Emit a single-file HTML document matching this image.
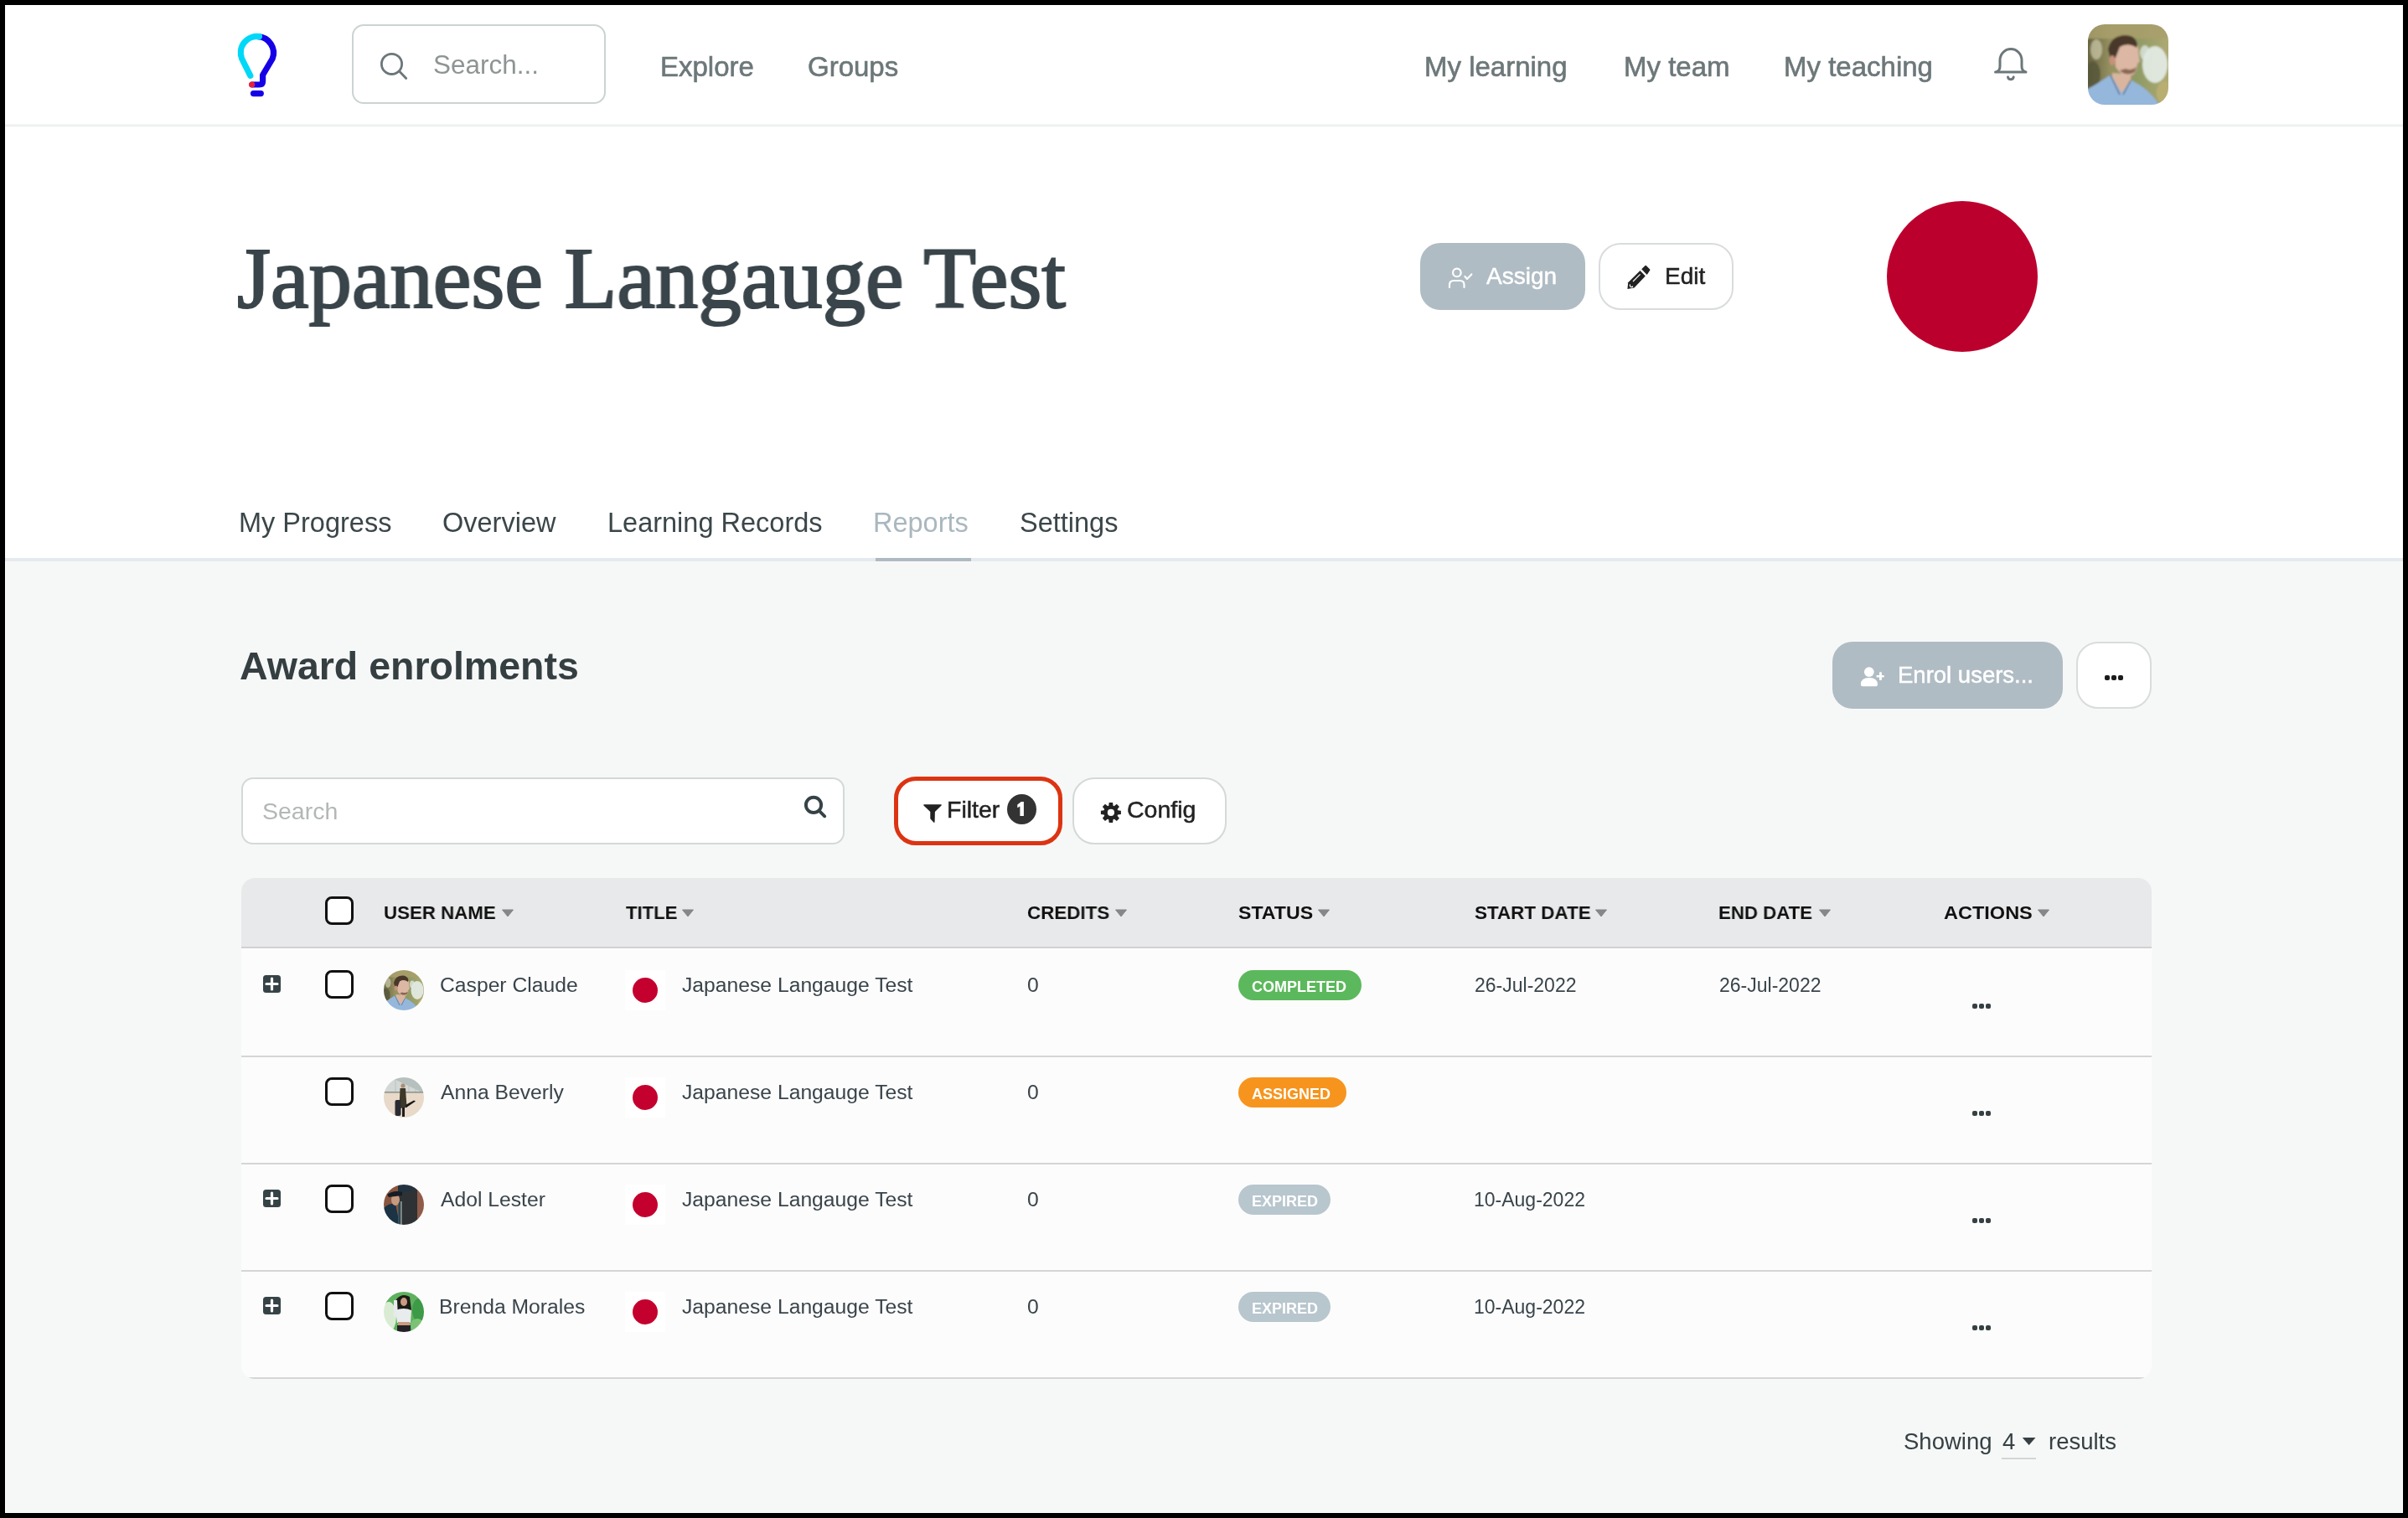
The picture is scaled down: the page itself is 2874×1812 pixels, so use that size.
<!DOCTYPE html><html><head><meta charset="utf-8"><style>
html,body{margin:0;padding:0;width:2874px;height:1812px;overflow:hidden;background:#000}
.t{position:absolute;white-space:nowrap;will-change:transform}
.b{position:absolute;display:block}
</style></head><body>
<div class="b" style="left:0px;top:0px;width:2874px;height:1812px;background:#000"></div>
<div class="b" style="left:6px;top:6px;width:2862px;height:1800px;background:#fff"></div>
<div class="b" style="left:7px;top:670px;width:2860px;height:1135px;background:#f6f8f7"></div>
<div class="b" style="left:6px;top:148px;width:2862px;height:2px;background:#f2f3f5"></div>
<div class="b" style="left:6px;top:150px;width:2862px;height:1px;background:#eaebec"></div>
<svg class="b" style="left:270px;top:30px" width="80" height="95" viewBox="0 0 80 95"><g fill="none" stroke-linecap="round" stroke-linejoin="round" stroke-width="7.2">
<path d="M38 13.6 A19.5 19.5 0 0 1 55.2 40 L43.6 59.5 L43.6 67 Q43.6 71 39.6 71 L31 71" stroke="#1600e6"/>
<path d="M39.5 13.6 A19.5 19.5 0 0 0 18.6 40 L28.8 60.3" stroke="#00d8f8"/>
<path d="M32.5 81.6 L41.3 81.6" stroke="#1600e6"/>
</g><circle cx="30.6" cy="71" r="3.6" fill="#e8213b"/></svg>
<div class="b" style="left:420px;top:29px;width:303px;height:95px;border:2px solid #ccd3d3;border-radius:14px;box-sizing:border-box;background:#fff"></div>
<svg class="b" style="left:440px;top:50px" width="60" height="60" viewBox="0 0 60 60"><g fill="none" stroke="#6c777a" stroke-width="2.8" stroke-linecap="round"><circle cx="27.5" cy="26.4" r="12.1"/><path d="M37 35.6 L44.7 43.5"/></g></svg>
<div class="t" id="t0" style="left:516.8px;top:62.0px;font-size:31px;line-height:31px;color:#8e9494;font-weight:400;font-family:'Liberation Sans',sans-serif;transform:scaleX(1.0161);transform-origin:1.8px 0;">Search...</div>
<div class="t" id="t1" style="left:788.0px;top:63.0px;font-size:33px;line-height:33px;color:#6c7779;font-weight:400;font-family:'Liberation Sans',sans-serif;-webkit-text-stroke:0.6px #6c7779;">Explore</div>
<div class="t" id="t2" style="left:964.4px;top:63.0px;font-size:33px;line-height:33px;color:#6c7779;font-weight:400;font-family:'Liberation Sans',sans-serif;-webkit-text-stroke:0.6px #6c7779;">Groups</div>
<div class="t" id="t3" style="left:1699.9px;top:63.0px;font-size:33px;line-height:33px;color:#6c7779;font-weight:400;font-family:'Liberation Sans',sans-serif;-webkit-text-stroke:0.6px #6c7779;">My learning</div>
<div class="t" id="t4" style="left:1937.7px;top:63.0px;font-size:33px;line-height:33px;color:#6c7779;font-weight:400;font-family:'Liberation Sans',sans-serif;-webkit-text-stroke:0.6px #6c7779;">My team</div>
<div class="t" id="t5" style="left:2128.9px;top:63.0px;font-size:33px;line-height:33px;color:#6c7779;font-weight:400;font-family:'Liberation Sans',sans-serif;-webkit-text-stroke:0.6px #6c7779;">My teaching</div>
<svg class="b" style="left:2370px;top:48px" width="60" height="60" viewBox="0 0 60 60"><g fill="none" stroke="#6c777a" stroke-width="3" stroke-linecap="round" stroke-linejoin="round">
<path d="M11.5 37.9 L48 37.9"/><path d="M13 37.6 Q17 36.5 17 31 L17 24 A13 13.4 0 0 1 43 24 L43 31 Q43 36.5 47 37.6"/>
<path d="M26.5 44 A3.4 3.4 0 0 0 33.2 44"/></g></svg>
<svg class="b" style="left:2492px;top:29px" width="96" height="96" viewBox="0 0 96 96"><clipPath id="avc"><rect width="96" height="96" rx="20"/></clipPath><g clip-path="url(#avc)"><defs><filter id="blh" x="-10%" y="-10%" width="120%" height="120%"><feGaussianBlur stdDeviation="1.2"/></filter>
<linearGradient id="bgh" x1="0" y1="0" x2="1" y2="0"><stop offset="0" stop-color="#5f5c3a"/><stop offset="0.3" stop-color="#959161"/><stop offset="0.6" stop-color="#8f9a64"/><stop offset="1" stop-color="#b2ab74"/></linearGradient></defs>
<g filter="url(#blh)">
<rect x="-5" y="-5" width="106" height="106" fill="url(#bgh)"/>
<rect x="-5" y="-5" width="106" height="22" fill="#a99f6c" opacity="0.85"/>
<ellipse cx="10" cy="30" rx="7" ry="12" fill="#d6d3b6" opacity="0.65"/>
<ellipse cx="6" cy="60" rx="9" ry="16" fill="#55553a" opacity="0.8"/>
<ellipse cx="80" cy="48" rx="15" ry="22" fill="#e6ede9" opacity="0.9"/>
<ellipse cx="68" cy="34" rx="6" ry="9" fill="#dfe7e2" opacity="0.8"/>
<ellipse cx="92" cy="82" rx="10" ry="14" fill="#b9ae72"/>
<path d="M-5 80 Q10 72 26 61 L52 67 Q72 76 86 97 L-5 97 Z" fill="#95b7dc"/>
<path d="M29 58 L51 60 L51 67 L40 82 L29 63 Z" fill="#d9b59f"/>
<path d="M27 61 L38 84 M51 67 L42 84" stroke="#4d6480" stroke-width="1.3" fill="none"/>
<path d="M32 30 Q36 19 48 18 Q58 18 60 28 L61 40 L62 44 L59 47 L58 54 Q56 60 50 62 Q40 62 33 51 Z" fill="#dcb7a3"/>
<path d="M24 30 Q27 14 44 13 Q57 13 59 24 L58 28 Q48 21 38 27 L33 40 L27 42 Z" fill="#4a372c"/>
<path d="M38 55 Q46 63 56 57 L58 51 Q52 56 45 53 Z" fill="#7b5b47" opacity="0.85"/>
<ellipse cx="29" cy="43" rx="3.5" ry="6" fill="#c9907a"/>
</g></g></svg>
<div class="t" id="t6" style="left:283.4px;top:281.0px;font-size:103px;line-height:103px;color:#39454a;font-weight:400;font-family:'Liberation Serif',serif;-webkit-text-stroke:2.2px #39454a;transform:scaleX(0.9969);transform-origin:1.4px 0;">Japanese Langauge Test</div>
<div class="b" style="left:1695px;top:290px;width:197px;height:80px;background:#b0bcc4;border-radius:24px"></div>
<svg class="b" style="left:1720px;top:310px" width="50" height="40" viewBox="0 0 50 40"><g fill="none" stroke="#fff" stroke-width="2.2" stroke-linecap="round" stroke-linejoin="round"><circle cx="18.85" cy="15.4" r="4.8"/><path d="M10 33 L10 30 Q10 25 15 25 L22.5 25 Q27.5 25 27.5 30 L27.5 33"/><path d="M28.4 20 L31 22.9 L36.3 17.4"/></g></svg>
<div class="t" id="t7" style="left:1773.9px;top:316.2px;font-size:28px;line-height:28px;color:#ffffff;font-weight:400;font-family:'Liberation Sans',sans-serif;-webkit-text-stroke:0.5px #ffffff;">Assign</div>
<div class="b" style="left:1908px;top:290px;width:161px;height:80px;border:2px solid #d9dcdd;border-radius:26px;box-sizing:border-box;background:#fff"></div>
<svg class="b" style="left:1935px;top:310px" width="40" height="40" viewBox="0 0 40 40"><g fill="#222">
<path d="M24.2 11.3 L28.6 7 Q29.3 6.5 30 7.2 L34.2 11.4 Q34.8 12.2 34 13 L30.7 17.9 Z"/>
<path d="M22.5 13 L28.8 19.6 L15.5 33.4 L7.4 35 L8.2 27.2 Z"/>
</g><path d="M22.6 17.4 L14 26" stroke="#fff" stroke-width="1.2"/><path d="M10.5 29.5 Q10 31.5 11 32.3 Q12 33 14 32" stroke="#fff" stroke-width="1.4" fill="none"/></svg>
<div class="t" id="t8" style="left:1986.9px;top:316.4px;font-size:28px;line-height:28px;color:#222222;font-weight:400;font-family:'Liberation Sans',sans-serif;-webkit-text-stroke:0.5px #222222;">Edit</div>
<div class="b" style="left:2252px;top:240px;width:180px;height:180px;background:#bc002d;border-radius:50%"></div>
<div class="t" id="t9" style="left:285.0px;top:607.8px;font-size:32.5px;line-height:32.5px;color:#3b4649;font-weight:400;font-family:'Liberation Sans',sans-serif;">My Progress</div>
<div class="t" id="t10" style="left:527.5px;top:607.8px;font-size:32.5px;line-height:32.5px;color:#3b4649;font-weight:400;font-family:'Liberation Sans',sans-serif;">Overview</div>
<div class="t" id="t11" style="left:725.0px;top:607.8px;font-size:32.5px;line-height:32.5px;color:#3b4649;font-weight:400;font-family:'Liberation Sans',sans-serif;">Learning Records</div>
<div class="t" id="t12" style="left:1042.0px;top:607.8px;font-size:32.5px;line-height:32.5px;color:#aab7bf;font-weight:400;font-family:'Liberation Sans',sans-serif;">Reports</div>
<div class="t" id="t13" style="left:1217.0px;top:607.8px;font-size:32.5px;line-height:32.5px;color:#3b4649;font-weight:400;font-family:'Liberation Sans',sans-serif;">Settings</div>
<div class="b" style="left:6px;top:666px;width:2862px;height:4px;background:#e4eaed"></div>
<div class="b" style="left:1045px;top:666px;width:114px;height:4px;background:#aebac2"></div>
<div class="t" id="t14" style="left:286.4px;top:772.0px;font-size:46.5px;line-height:46.5px;color:#353f42;font-weight:700;font-family:'Liberation Sans',sans-serif;">Award enrolments</div>
<div class="b" style="left:2187px;top:766px;width:275px;height:80px;background:#b0bcc4;border-radius:24px"></div>
<svg class="b" style="left:2210px;top:788px" width="50" height="40" viewBox="0 0 50 40"><g fill="#fff"><circle cx="20.8" cy="14.1" r="5.9"/><path d="M10.9 29 Q10.9 21 20.9 21 Q30.9 21 30.9 29 L30.9 29.5 Q30.9 31.3 29 31.3 L12.8 31.3 Q10.9 31.3 10.9 29.5 Z"/><rect x="33" y="14.2" width="2.9" height="9.9" rx="0.8"/><rect x="29.5" y="17.9" width="9.3" height="2.7" rx="0.8"/></g></svg>
<div class="t" id="t15" style="left:2265.4px;top:791.5px;font-size:27.5px;line-height:27.5px;color:#ffffff;font-weight:400;font-family:'Liberation Sans',sans-serif;-webkit-text-stroke:0.5px #ffffff;">Enrol users...</div>
<div class="b" style="left:2478px;top:766px;width:90px;height:80px;border:2px solid #d9dcdd;border-radius:26px;box-sizing:border-box;background:#fff"></div>
<div class="b" style="left:2512.0px;top:806px;width:5.8px;height:6.2px;background:#1b1b1b;border-radius:2px"></div>
<div class="b" style="left:2520.2px;top:806px;width:5.8px;height:6.2px;background:#1b1b1b;border-radius:2px"></div>
<div class="b" style="left:2528.4px;top:806px;width:5.8px;height:6.2px;background:#1b1b1b;border-radius:2px"></div>
<div class="b" style="left:288px;top:928px;width:720px;height:80px;border:2px solid #d2d9d7;border-radius:14px;box-sizing:border-box;background:#fff"></div>
<div class="t" id="t16" style="left:312.6px;top:954.2px;font-size:28.5px;line-height:28.5px;color:#b4b7b7;font-weight:400;font-family:'Liberation Sans',sans-serif;">Search</div>
<svg class="b" style="left:950px;top:940px" width="45" height="45" viewBox="0 0 45 45"><g fill="none" stroke="#364346" stroke-width="3.9" stroke-linecap="round"><circle cx="21" cy="20.9" r="9.1"/><path d="M28.5 28.6 L34.2 34.3"/></g></svg>
<div class="b" style="left:1067px;top:927px;width:201px;height:82px;border:5px solid #dc3412;border-radius:26px;box-sizing:border-box;background:#fff"></div>
<svg class="b" style="left:1095px;top:945px" width="40" height="45" viewBox="0 0 40 45"><path d="M7.8 15.3 L28.2 15.3 Q29.4 15.6 28.6 16.6 L20.9 24 L20.6 36.2 Q20 37.4 19.2 36.6 L15.3 32.2 L15.3 24 L7.4 16.6 Q6.7 15.6 7.8 15.3 Z" fill="#222"/></svg>
<div class="t" id="t17" style="left:1130.1px;top:952.0px;font-size:28.5px;line-height:28.5px;color:#222222;font-weight:400;font-family:'Liberation Sans',sans-serif;-webkit-text-stroke:0.5px #222222;">Filter</div>
<div class="b" style="left:1202px;top:948px;width:35px;height:36px;background:#333;border-radius:50%"></div>
<svg class="b" style="left:1202px;top:948px" width="36" height="36" viewBox="0 0 36 36"><path d="M15.4 26 L15.4 14.6 L12.3 16.3 L12.3 12.6 L16.8 9.1 L19.9 9.1 L19.9 26 Z" fill="#fff"/></svg>
<div class="b" style="left:1280px;top:928px;width:184px;height:80px;border:2px solid #d3d9d8;border-radius:26px;box-sizing:border-box;background:#fff"></div>
<svg class="b" style="left:1305px;top:950px" width="40" height="40" viewBox="0 0 40 40"><g transform="translate(20.9 19.9)" fill="#222"><path d="M-2.2 -12 L2.2 -12 L2.9 -6 L-2.9 -6 Z" transform="rotate(0)"/><path d="M-2.2 -12 L2.2 -12 L2.9 -6 L-2.9 -6 Z" transform="rotate(45)"/><path d="M-2.2 -12 L2.2 -12 L2.9 -6 L-2.9 -6 Z" transform="rotate(90)"/><path d="M-2.2 -12 L2.2 -12 L2.9 -6 L-2.9 -6 Z" transform="rotate(135)"/><path d="M-2.2 -12 L2.2 -12 L2.9 -6 L-2.9 -6 Z" transform="rotate(180)"/><path d="M-2.2 -12 L2.2 -12 L2.9 -6 L-2.9 -6 Z" transform="rotate(225)"/><path d="M-2.2 -12 L2.2 -12 L2.9 -6 L-2.9 -6 Z" transform="rotate(270)"/><path d="M-2.2 -12 L2.2 -12 L2.9 -6 L-2.9 -6 Z" transform="rotate(315)"/><circle r="8.6"/><circle r="4.1" fill="#fff"/></g></svg>
<div class="t" id="t18" style="left:1344.9px;top:952.0px;font-size:28.5px;line-height:28.5px;color:#222222;font-weight:400;font-family:'Liberation Sans',sans-serif;-webkit-text-stroke:0.5px #222222;">Config</div>
<div class="b" style="left:288px;top:1048px;width:2280px;height:598px;background:#fcfcfc;border-radius:16px;overflow:hidden"></div>
<div class="b" style="left:288px;top:1048px;width:2280px;height:82px;background:#e8e9eb;border-radius:16px 16px 0 0"></div>
<div class="b" style="left:288px;top:1130px;width:2280px;height:2px;background:#d1d1d1"></div>
<div class="b" style="left:388px;top:1070px;width:34px;height:34px;border:3px solid #111;border-radius:8px;box-sizing:border-box;background:#fff"></div>
<div class="t" id="t19" style="left:457.5px;top:1079.0px;font-size:22.5px;line-height:22.5px;color:#111111;font-weight:700;font-family:'Liberation Sans',sans-serif;transform:scaleX(0.9904);transform-origin:1.0px 0;">USER NAME</div>
<svg class="b" style="left:599px;top:1085px" width="14" height="10" viewBox="0 0 14 10"><path d="M0.5 1 L13.5 1 L7 9 Z" fill="#878787" stroke="#878787" stroke-width="1" stroke-linejoin="round"/></svg>
<div class="t" id="t20" style="left:746.5px;top:1079.0px;font-size:22.5px;line-height:22.5px;color:#111111;font-weight:700;font-family:'Liberation Sans',sans-serif;transform:scaleX(0.9832);transform-origin:0.0px 0;">TITLE</div>
<svg class="b" style="left:814px;top:1085px" width="14" height="10" viewBox="0 0 14 10"><path d="M0.5 1 L13.5 1 L7 9 Z" fill="#878787" stroke="#878787" stroke-width="1" stroke-linejoin="round"/></svg>
<div class="t" id="t21" style="left:1226.1px;top:1079.0px;font-size:22.5px;line-height:22.5px;color:#111111;font-weight:700;font-family:'Liberation Sans',sans-serif;transform:scaleX(0.9942);transform-origin:0.6px 0;">CREDITS</div>
<svg class="b" style="left:1331px;top:1085px" width="14" height="10" viewBox="0 0 14 10"><path d="M0.5 1 L13.5 1 L7 9 Z" fill="#878787" stroke="#878787" stroke-width="1" stroke-linejoin="round"/></svg>
<div class="t" id="t22" style="left:1477.9px;top:1079.0px;font-size:22.5px;line-height:22.5px;color:#111111;font-weight:700;font-family:'Liberation Sans',sans-serif;transform:scaleX(1.0286);transform-origin:0.4px 0;">STATUS</div>
<svg class="b" style="left:1573px;top:1085px" width="14" height="10" viewBox="0 0 14 10"><path d="M0.5 1 L13.5 1 L7 9 Z" fill="#878787" stroke="#878787" stroke-width="1" stroke-linejoin="round"/></svg>
<div class="t" id="t23" style="left:1759.6px;top:1079.0px;font-size:22.5px;line-height:22.5px;color:#111111;font-weight:700;font-family:'Liberation Sans',sans-serif;transform:scaleX(0.9960);transform-origin:0.6px 0;">START DATE</div>
<svg class="b" style="left:1904px;top:1085px" width="14" height="10" viewBox="0 0 14 10"><path d="M0.5 1 L13.5 1 L7 9 Z" fill="#878787" stroke="#878787" stroke-width="1" stroke-linejoin="round"/></svg>
<div class="t" id="t24" style="left:2051.4px;top:1079.0px;font-size:22.5px;line-height:22.5px;color:#111111;font-weight:700;font-family:'Liberation Sans',sans-serif;transform:scaleX(0.9885);transform-origin:1.4px 0;">END DATE</div>
<svg class="b" style="left:2171px;top:1085px" width="14" height="10" viewBox="0 0 14 10"><path d="M0.5 1 L13.5 1 L7 9 Z" fill="#878787" stroke="#878787" stroke-width="1" stroke-linejoin="round"/></svg>
<div class="t" id="t25" style="left:2320.2px;top:1079.0px;font-size:22.5px;line-height:22.5px;color:#111111;font-weight:700;font-family:'Liberation Sans',sans-serif;transform:scaleX(1.0449);transform-origin:0.2px 0;">ACTIONS</div>
<svg class="b" style="left:2432px;top:1085px" width="14" height="10" viewBox="0 0 14 10"><path d="M0.5 1 L13.5 1 L7 9 Z" fill="#878787" stroke="#878787" stroke-width="1" stroke-linejoin="round"/></svg>
<svg class="b" style="left:314px;top:1164px" width="21" height="21" viewBox="0 0 21 21"><rect width="21" height="21" rx="3.5" fill="#364346"/><path d="M10.5 4 L10.5 17 M4 10.5 L17 10.5" stroke="#fff" stroke-width="3.2" stroke-linecap="round"/></svg>
<div class="b" style="left:388px;top:1158px;width:34px;height:34px;border:3px solid #111;border-radius:8px;box-sizing:border-box;background:#fff"></div>
<svg class="b" style="left:458px;top:1158px" width="48" height="48" viewBox="0 0 48 48"><defs><filter id="ab0"><feGaussianBlur stdDeviation="0.7"/></filter></defs><clipPath id="ac0"><circle cx="24" cy="24" r="24"/></clipPath><g clip-path="url(#ac0)"><g filter="url(#ab0)"><g transform="scale(0.5)"><defs><filter id="blr0" x="-10%" y="-10%" width="120%" height="120%"><feGaussianBlur stdDeviation="1.2"/></filter>
<linearGradient id="bgr0" x1="0" y1="0" x2="1" y2="0"><stop offset="0" stop-color="#5f5c3a"/><stop offset="0.3" stop-color="#959161"/><stop offset="0.6" stop-color="#8f9a64"/><stop offset="1" stop-color="#b2ab74"/></linearGradient></defs>
<g filter="url(#blr0)">
<rect x="-5" y="-5" width="106" height="106" fill="url(#bgr0)"/>
<rect x="-5" y="-5" width="106" height="22" fill="#a99f6c" opacity="0.85"/>
<ellipse cx="10" cy="30" rx="7" ry="12" fill="#d6d3b6" opacity="0.65"/>
<ellipse cx="6" cy="60" rx="9" ry="16" fill="#55553a" opacity="0.8"/>
<ellipse cx="80" cy="48" rx="15" ry="22" fill="#e6ede9" opacity="0.9"/>
<ellipse cx="68" cy="34" rx="6" ry="9" fill="#dfe7e2" opacity="0.8"/>
<ellipse cx="92" cy="82" rx="10" ry="14" fill="#b9ae72"/>
<path d="M-5 80 Q10 72 26 61 L52 67 Q72 76 86 97 L-5 97 Z" fill="#95b7dc"/>
<path d="M29 58 L51 60 L51 67 L40 82 L29 63 Z" fill="#d9b59f"/>
<path d="M27 61 L38 84 M51 67 L42 84" stroke="#4d6480" stroke-width="1.3" fill="none"/>
<path d="M32 30 Q36 19 48 18 Q58 18 60 28 L61 40 L62 44 L59 47 L58 54 Q56 60 50 62 Q40 62 33 51 Z" fill="#dcb7a3"/>
<path d="M24 30 Q27 14 44 13 Q57 13 59 24 L58 28 Q48 21 38 27 L33 40 L27 42 Z" fill="#4a372c"/>
<path d="M38 55 Q46 63 56 57 L58 51 Q52 56 45 53 Z" fill="#7b5b47" opacity="0.85"/>
<ellipse cx="29" cy="43" rx="3.5" ry="6" fill="#c9907a"/>
</g></g></g></g></svg>
<div class="t" id="t26" style="left:525.2px;top:1163.7px;font-size:24.7px;line-height:24.7px;color:#39444a;font-weight:400;font-family:'Liberation Sans',sans-serif;">Casper Claude</div>
<div class="b" style="left:746px;top:1158px;width:48px;height:48px;background:#fff"></div>
<div class="b" style="left:755px;top:1167px;width:30px;height:30px;background:#c4002e;border-radius:50%"></div>
<div class="t" id="t27" style="left:814.4px;top:1163.7px;font-size:24.7px;line-height:24.7px;color:#39444a;font-weight:400;font-family:'Liberation Sans',sans-serif;">Japanese Langauge Test</div>
<div class="t" id="t28" style="left:1225.5px;top:1163.7px;font-size:24.7px;line-height:24.7px;color:#39444a;font-weight:400;font-family:'Liberation Sans',sans-serif;">0</div>
<div class="b" style="left:1478px;top:1158px;width:147px;height:36px;background:#5cb85c;border-radius:18px"></div>
<div class="t" id="t29" style="left:1493.5px;top:1168.7px;font-size:18px;line-height:18px;color:#ffffff;font-weight:700;font-family:'Liberation Sans',sans-serif;">COMPLETED</div>
<div class="t" id="t30" style="left:1759.5px;top:1164.7px;font-size:23px;line-height:23px;color:#39444a;font-weight:400;font-family:'Liberation Sans',sans-serif;">26-Jul-2022</div>
<div class="t" id="t31" style="left:2051.5px;top:1164.7px;font-size:23px;line-height:23px;color:#39444a;font-weight:400;font-family:'Liberation Sans',sans-serif;">26-Jul-2022</div>
<div class="b" style="left:2353.8px;top:1198px;width:5.8px;height:6.2px;background:#364043;border-radius:2px"></div>
<div class="b" style="left:2362.0px;top:1198px;width:5.8px;height:6.2px;background:#364043;border-radius:2px"></div>
<div class="b" style="left:2370.2000000000003px;top:1198px;width:5.8px;height:6.2px;background:#364043;border-radius:2px"></div>
<div class="b" style="left:288px;top:1260px;width:2280px;height:2px;background:#d5d5d5"></div>
<div class="b" style="left:388px;top:1286px;width:34px;height:34px;border:3px solid #111;border-radius:8px;box-sizing:border-box;background:#fff"></div>
<svg class="b" style="left:458px;top:1286px" width="48" height="48" viewBox="0 0 48 48"><defs><filter id="ab1"><feGaussianBlur stdDeviation="0.7"/></filter></defs><clipPath id="ac1"><circle cx="24" cy="24" r="24"/></clipPath><g clip-path="url(#ac1)"><g filter="url(#ab1)"><rect width="48" height="48" fill="#e8d9c8"/><rect width="48" height="18" fill="#d3d8d6"/><path d="M8 0 L46 18 L48 18 L48 0 Z" fill="#a9b6b4" opacity="0.7"/><path d="M14 2 L14 18 M22 1 L22 18 M30 4 L30 18 M38 8 L38 18" stroke="#b9c2c0" stroke-width="1"/><rect y="17" width="48" height="1.6" fill="#8f948f"/>
<circle cx="23" cy="10" r="2.6" fill="#b08c73"/><path d="M19.5 13 L26 13 L27.5 36 L18.5 37 Z" fill="#3e372a"/><path d="M26 33 L36 27.5 L38 28.5 L27 36 Z" fill="#161616"/><rect x="13.5" y="27" width="7" height="19" rx="2" fill="#2a2b30"/><rect x="22" y="36" width="3" height="11" fill="#1b1b1b"/></g></g></svg>
<div class="t" id="t32" style="left:526.2px;top:1291.7px;font-size:24.7px;line-height:24.7px;color:#39444a;font-weight:400;font-family:'Liberation Sans',sans-serif;">Anna Beverly</div>
<div class="b" style="left:746px;top:1286px;width:48px;height:48px;background:#fff"></div>
<div class="b" style="left:755px;top:1295px;width:30px;height:30px;background:#c4002e;border-radius:50%"></div>
<div class="t" id="t33" style="left:814.4px;top:1291.7px;font-size:24.7px;line-height:24.7px;color:#39444a;font-weight:400;font-family:'Liberation Sans',sans-serif;">Japanese Langauge Test</div>
<div class="t" id="t34" style="left:1225.5px;top:1291.7px;font-size:24.7px;line-height:24.7px;color:#39444a;font-weight:400;font-family:'Liberation Sans',sans-serif;">0</div>
<div class="b" style="left:1478px;top:1286px;width:129px;height:36px;background:#f7941d;border-radius:18px"></div>
<div class="t" id="t35" style="left:1493.5px;top:1296.7px;font-size:18px;line-height:18px;color:#ffffff;font-weight:700;font-family:'Liberation Sans',sans-serif;">ASSIGNED</div>
<div class="b" style="left:2353.8px;top:1326px;width:5.8px;height:6.2px;background:#364043;border-radius:2px"></div>
<div class="b" style="left:2362.0px;top:1326px;width:5.8px;height:6.2px;background:#364043;border-radius:2px"></div>
<div class="b" style="left:2370.2000000000003px;top:1326px;width:5.8px;height:6.2px;background:#364043;border-radius:2px"></div>
<div class="b" style="left:288px;top:1388px;width:2280px;height:2px;background:#d5d5d5"></div>
<svg class="b" style="left:314px;top:1420px" width="21" height="21" viewBox="0 0 21 21"><rect width="21" height="21" rx="3.5" fill="#364346"/><path d="M10.5 4 L10.5 17 M4 10.5 L17 10.5" stroke="#fff" stroke-width="3.2" stroke-linecap="round"/></svg>
<div class="b" style="left:388px;top:1414px;width:34px;height:34px;border:3px solid #111;border-radius:8px;box-sizing:border-box;background:#fff"></div>
<svg class="b" style="left:458px;top:1414px" width="48" height="48" viewBox="0 0 48 48"><defs><filter id="ab2"><feGaussianBlur stdDeviation="0.7"/></filter></defs><clipPath id="ac2"><circle cx="24" cy="24" r="24"/></clipPath><g clip-path="url(#ac2)"><g filter="url(#ab2)"><rect width="48" height="48" fill="#8a5640"/><rect x="17" y="0" width="25" height="48" fill="#2e3134"/><rect x="40" y="0" width="8" height="48" fill="#8e5c4a"/><path d="M17 0 L36 0 L33 8 L17 10Z" fill="#213240"/>
<path d="M0 28 Q6 22 14 23 L19 48 L0 48Z" fill="#1c3044"/><ellipse cx="14" cy="18" rx="5" ry="7" fill="#c69a80"/><path d="M4 12 Q12 6 22 9 L22 13 L6 15Z" fill="#141d26"/><rect x="20" y="20" width="1.6" height="28" fill="#8fa09e"/><rect x="17" y="22" width="2" height="26" fill="#3f6a78" opacity="0.6"/></g></g></svg>
<div class="t" id="t36" style="left:526.2px;top:1419.7px;font-size:24.7px;line-height:24.7px;color:#39444a;font-weight:400;font-family:'Liberation Sans',sans-serif;">Adol Lester</div>
<div class="b" style="left:746px;top:1414px;width:48px;height:48px;background:#fff"></div>
<div class="b" style="left:755px;top:1423px;width:30px;height:30px;background:#c4002e;border-radius:50%"></div>
<div class="t" id="t37" style="left:814.4px;top:1419.7px;font-size:24.7px;line-height:24.7px;color:#39444a;font-weight:400;font-family:'Liberation Sans',sans-serif;">Japanese Langauge Test</div>
<div class="t" id="t38" style="left:1225.5px;top:1419.7px;font-size:24.7px;line-height:24.7px;color:#39444a;font-weight:400;font-family:'Liberation Sans',sans-serif;">0</div>
<div class="b" style="left:1478px;top:1414px;width:110px;height:36px;background:#b8c6ce;border-radius:18px"></div>
<div class="t" id="t39" style="left:1493.5px;top:1424.7px;font-size:18px;line-height:18px;color:#ffffff;font-weight:700;font-family:'Liberation Sans',sans-serif;">EXPIRED</div>
<div class="t" id="t40" style="left:1758.5px;top:1420.7px;font-size:23px;line-height:23px;color:#39444a;font-weight:400;font-family:'Liberation Sans',sans-serif;">10-Aug-2022</div>
<div class="b" style="left:2353.8px;top:1454px;width:5.8px;height:6.2px;background:#364043;border-radius:2px"></div>
<div class="b" style="left:2362.0px;top:1454px;width:5.8px;height:6.2px;background:#364043;border-radius:2px"></div>
<div class="b" style="left:2370.2000000000003px;top:1454px;width:5.8px;height:6.2px;background:#364043;border-radius:2px"></div>
<div class="b" style="left:288px;top:1516px;width:2280px;height:2px;background:#d5d5d5"></div>
<svg class="b" style="left:314px;top:1548px" width="21" height="21" viewBox="0 0 21 21"><rect width="21" height="21" rx="3.5" fill="#364346"/><path d="M10.5 4 L10.5 17 M4 10.5 L17 10.5" stroke="#fff" stroke-width="3.2" stroke-linecap="round"/></svg>
<div class="b" style="left:388px;top:1542px;width:34px;height:34px;border:3px solid #111;border-radius:8px;box-sizing:border-box;background:#fff"></div>
<svg class="b" style="left:458px;top:1542px" width="48" height="48" viewBox="0 0 48 48"><defs><filter id="ab3"><feGaussianBlur stdDeviation="0.7"/></filter></defs><clipPath id="ac3"><circle cx="24" cy="24" r="24"/></clipPath><g clip-path="url(#ac3)"><g filter="url(#ab3)"><rect width="48" height="48" fill="#5fb15e"/><ellipse cx="6" cy="30" rx="9" ry="18" fill="#d9ecd3"/><ellipse cx="42" cy="22" rx="8" ry="14" fill="#3d9a47"/><ellipse cx="40" cy="40" rx="8" ry="8" fill="#7cc276"/>
<path d="M15 9 Q22 1 31 6 L33 22 L16 24Z" fill="#1d1a18"/><ellipse cx="24" cy="12" rx="4" ry="5" fill="#c99c82"/><path d="M12 10 L16 10 L17 30 L12 30 Z" fill="#e6eaea"/><path d="M14 22 Q24 18 33 22 L32 37 L16 37Z" fill="#e8ecec"/><rect x="17" y="36" width="14" height="4" fill="#c99c82"/><rect x="16" y="40" width="16" height="8" fill="#232325"/></g></g></svg>
<div class="t" id="t41" style="left:524.2px;top:1547.7px;font-size:24.7px;line-height:24.7px;color:#39444a;font-weight:400;font-family:'Liberation Sans',sans-serif;">Brenda Morales</div>
<div class="b" style="left:746px;top:1542px;width:48px;height:48px;background:#fff"></div>
<div class="b" style="left:755px;top:1551px;width:30px;height:30px;background:#c4002e;border-radius:50%"></div>
<div class="t" id="t42" style="left:814.4px;top:1547.7px;font-size:24.7px;line-height:24.7px;color:#39444a;font-weight:400;font-family:'Liberation Sans',sans-serif;">Japanese Langauge Test</div>
<div class="t" id="t43" style="left:1225.5px;top:1547.7px;font-size:24.7px;line-height:24.7px;color:#39444a;font-weight:400;font-family:'Liberation Sans',sans-serif;">0</div>
<div class="b" style="left:1478px;top:1542px;width:110px;height:36px;background:#b8c6ce;border-radius:18px"></div>
<div class="t" id="t44" style="left:1493.5px;top:1552.7px;font-size:18px;line-height:18px;color:#ffffff;font-weight:700;font-family:'Liberation Sans',sans-serif;">EXPIRED</div>
<div class="t" id="t45" style="left:1758.5px;top:1548.7px;font-size:23px;line-height:23px;color:#39444a;font-weight:400;font-family:'Liberation Sans',sans-serif;">10-Aug-2022</div>
<div class="b" style="left:2353.8px;top:1582px;width:5.8px;height:6.2px;background:#364043;border-radius:2px"></div>
<div class="b" style="left:2362.0px;top:1582px;width:5.8px;height:6.2px;background:#364043;border-radius:2px"></div>
<div class="b" style="left:2370.2000000000003px;top:1582px;width:5.8px;height:6.2px;background:#364043;border-radius:2px"></div>
<div class="b" style="left:288px;top:1596px;width:2280px;height:50px;border-radius:0 0 16px 16px;overflow:hidden"><div class="b" style="left:0;top:48px;width:2280px;height:2px;background:#d5d5d5"></div></div>
<div class="t" id="t46" style="left:2271.8px;top:1706.6px;font-size:27.5px;line-height:27.5px;color:#364043;font-weight:400;font-family:'Liberation Sans',sans-serif;">Showing</div>
<div class="t" id="t47" style="left:2389.9px;top:1706.6px;font-size:27.5px;line-height:27.5px;color:#364043;font-weight:400;font-family:'Liberation Sans',sans-serif;">4</div>
<svg class="b" style="left:2413px;top:1715px" width="18" height="11" viewBox="0 0 18 11"><path d="M0.8 1 L16.5 1 L8.6 10 Z" fill="#364043"/></svg>
<div class="b" style="left:2389px;top:1740px;width:41px;height:2px;background:#d4d4d4"></div>
<div class="t" id="t48" style="left:2444.9px;top:1706.6px;font-size:27.5px;line-height:27.5px;color:#364043;font-weight:400;font-family:'Liberation Sans',sans-serif;">results</div>
</body></html>
